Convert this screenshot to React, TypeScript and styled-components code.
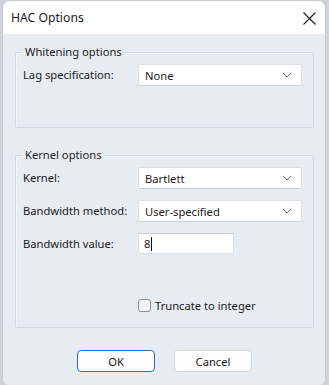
import React from 'react';
import styled, { createGlobalStyle } from 'styled-components';

const GlobalStyle = createGlobalStyle`
  html, body {
    margin: 0;
    padding: 0;
    background: #cfd3d9;
    overflow: hidden;
  }
  body {
    font-family: "Noto Sans", "Open Sans", sans-serif;
    font-size: 11.2px;
    color: #1a1a1a;
  }
`;

const Window = styled.div`
  box-sizing: border-box;
  margin-left: 2px;
  width: 324px;
  height: 385px;
  background: #e7ecf3;
  border: 1px solid #c4c9d0;
  border-bottom: none;
  border-radius: 8px 8px 6px 6px;
  overflow: hidden;
  display: flex;
  flex-direction: column;
`;

const TitleBar = styled.div`
  height: 33px;
  background: #ffffff;
  display: flex;
  align-items: center;
  justify-content: space-between;
  padding: 0 9px 0 8px;
`;

const Title = styled.span`
  font-size: 12.2px;
  color: #1b1b1b;
`;

const CloseButton = styled.div`
  width: 14px;
  height: 14px;
  display: flex;
  align-items: center;
  justify-content: center;
  margin-top: 1px;
`;

const Body = styled.div`
  flex: 1;
  padding: 10px 11px 0 12px;
  display: flex;
  flex-direction: column;
`;

const Group = styled.fieldset<{ $padBottom: number }>`
  margin: 0;
  border: 1px solid #d2d9e2;
  box-shadow: inset 1px 1px 0 #f2f5f9;
  border-radius: 2px;
  padding: 4px 10px ${p => p.$padBottom}px 7px;
  display: grid;
  grid-template-columns: 115px 164px;
  align-items: center;
  row-gap: 11px;
  & + & {
    margin-top: 19px;
  }
`;

const Legend = styled.legend`
  padding: 0 2px;
  margin-left: 0;
  line-height: 16px;
  color: #1b1b1b;
`;

const Label = styled.span`
  line-height: 16px;
`;

const Select = styled.div`
  box-sizing: border-box;
  height: 22px;
  background: #ffffff;
  border: 1px solid #dde1e6;
  border-bottom-color: #cdd2d8;
  border-radius: 2px;
  display: flex;
  align-items: center;
  justify-content: space-between;
  padding: 0 9px 0 6px;
`;

const TextField = styled.div`
  box-sizing: border-box;
  width: 96px;
  height: 21px;
  background: #ffffff;
  border: 1px solid #dde1e6;
  border-top-color: #c9ced5;
  display: flex;
  align-items: center;
  padding-left: 5px;
`;

const Caret = styled.span`
  display: inline-block;
  width: 1px;
  height: 14px;
  background: #000;
  margin-left: 1px;
`;

const CheckRow = styled.label`
  grid-column: 2;
  display: flex;
  align-items: center;
  gap: 4px;
  margin-top: 33px;
`;

const CheckBox = styled.span`
  box-sizing: border-box;
  width: 13px;
  height: 13px;
  border: 1px solid #8c8f94;
  border-radius: 3px;
  background: #f2f4f7;
`;

const Footer = styled.div`
  display: flex;
  justify-content: center;
  gap: 19px;
  margin-top: 22px;
`;

const Button = styled.button<{ $primary?: boolean }>`
  box-sizing: border-box;
  width: 78px;
  height: 22px;
  font-family: inherit;
  font-size: 11.2px;
  color: #1a1a1a;
  background: #fdfdfd;
  border: 1px solid ${p => (p.$primary ? '#2a70c4' : '#d3d6da')};
  border-radius: 4px;
  padding: 0;
`;

const Chevron = () => (
  <svg width="10" height="6" viewBox="0 0 10 6">
    <path d="M1 1 L5 5 L9 1" fill="none" stroke="#707070" strokeWidth="1" />
  </svg>
);

const Dropdown = ({ value }: { value: string }) => (
  <Select>
    <span>{value}</span>
    <Chevron />
  </Select>
);

export default function App() {
  return (
    <>
      <GlobalStyle />
      <Window>
        <TitleBar>
          <Title>HAC Options</Title>
          <CloseButton>
            <svg width="13" height="13" viewBox="0 0 13 13">
              <path d="M0.5 0.5 L12.5 12.5 M12.5 0.5 L0.5 12.5" stroke="#1b1b1b" strokeWidth="1.1" />
            </svg>
          </CloseButton>
        </TitleBar>
        <Body>
          <Group $padBottom={41}>
            <Legend>Whitening options</Legend>
            <Label>Lag specification:</Label>
            <Dropdown value="None" />
          </Group>
          <Group $padBottom={14}>
            <Legend>Kernel options</Legend>
            <Label>Kernel:</Label>
            <Dropdown value="Bartlett" />
            <Label>Bandwidth method:</Label>
            <Dropdown value="User-specified" />
            <Label>Bandwidth value:</Label>
            <TextField>
              8<Caret />
            </TextField>
            <CheckRow>
              <CheckBox />
              <span>Truncate to integer</span>
            </CheckRow>
          </Group>
          <Footer>
            <Button $primary>OK</Button>
            <Button>Cancel</Button>
          </Footer>
        </Body>
      </Window>
    </>
  );
}
